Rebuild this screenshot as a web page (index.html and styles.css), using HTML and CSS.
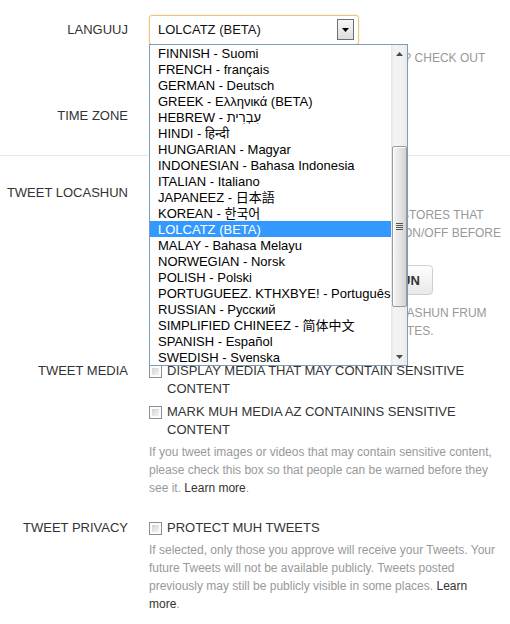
FILE: index.html
```html
<!DOCTYPE html>
<html lang="en">
<head>
<meta charset="utf-8">
<title>Settings</title>
<link rel="stylesheet" href="styles.css">
</head>
<body>
<div class="settings">
  <div class="row row-lang">
    <div class="label label-select">LANGUUJ</div>
    <div class="control">
      <div class="select-wrap">
        <div class="select is-open">
          <span class="select-value">LOLCATZ (BETA)</span>
          <span class="select-btn"><svg width="7" height="4" viewBox="0 0 7 4"><path d="M0 0H7L3.5 4Z" fill="#000"/></svg></span>
        </div>
        <div class="dropdown">
          <ul class="options">
            <li>FINNISH - Suomi</li>
            <li>FRENCH - français</li>
            <li>GERMAN - Deutsch</li>
            <li>GREEK - Ελληνικά (BETA)</li>
            <li>HEBREW - עִבְרִית</li>
            <li>HINDI - हिन्दी</li>
            <li>HUNGARIAN - Magyar</li>
            <li>INDONESIAN - Bahasa Indonesia</li>
            <li>ITALIAN - Italiano</li>
            <li>JAPANEEZ - 日本語</li>
            <li>KOREAN - 한국어</li>
            <li class="is-selected">LOLCATZ (BETA)</li>
            <li>MALAY - Bahasa Melayu</li>
            <li>NORWEGIAN - Norsk</li>
            <li>POLISH - Polski</li>
            <li>PORTUGUEEZ. KTHXBYE! - Português</li>
            <li>RUSSIAN - Русский</li>
            <li>SIMPLIFIED CHINEEZ - 简体中文</li>
            <li>SPANISH - Español</li>
            <li>SWEDISH - Svenska</li>
          </ul>
          <div class="scrollbar">
            <span class="sb-arrow"><svg width="7" height="4" viewBox="0 0 7 4"><path d="M3.5 0L7 4H0Z" fill="#4a4a4a"/></svg></span>
            <span class="sb-thumb"><span class="sb-grip"></span></span>
            <span class="sb-arrow sb-arrow-down"><svg width="7" height="4" viewBox="0 0 7 4"><path d="M0 0H7L3.5 4Z" fill="#4a4a4a"/></svg></span>
          </div>
        </div>
      </div>
      <p class="help caps">IZ U WANTIN TO HALP TRANZLATE TWITTER? CHECK OUT<br>DA TRANZLASHUN CENTUR.</p>
    </div>
  </div>

  <div class="row row-time">
    <div class="label label-select">TIME ZONE</div>
    <div class="control">
      <div class="select">
        <span class="select-value">(GMT-08:00) PACIFIK TIEM</span>
        <span class="select-btn"><svg width="7" height="4" viewBox="0 0 7 4"><path d="M0 0H7L3.5 4Z" fill="#000"/></svg></span>
      </div>
    </div>
  </div>

  <div class="row row-loc">
    <div class="label">TWEET LOCASHUN</div>
    <div class="control">
      <label class="check"><span class="box"></span><span class="check-text">ADD A LOCASHUN TO MUH TWEETS</span></label>
      <p class="help caps help-loc">WHEN U TWEET WIF LOCASHUN, TWITTER STORES THAT<br>LOCASHUN. U CAN SWITCH DA LOCASHUN ON/OFF BEFORE<br>EACH TWEET.</p>
      <button class="btn" type="button">DELEET ALL LOCASHUN INFORMASHUN</button>
      <p class="help caps help-after-btn">DIS WIL DELEET ALL DA LOCASHUN INFORMASHUN FRUM<br>ALL UR PAST TWEETS. IT MAY TAKE 30 MINUTES.</p>
    </div>
  </div>

  <div class="row row-media">
    <div class="label">TWEET MEDIA</div>
    <div class="control">
      <label class="check"><span class="box"></span><span class="check-text">DISPLAY MEDIA THAT MAY CONTAIN SENSITIVE CONTENT</span></label>
      <label class="check check-next"><span class="box"></span><span class="check-text">MARK MUH MEDIA AZ CONTAININS SENSITIVE CONTENT</span></label>
      <p class="help help-text">If you tweet images or videos that may contain sensitive content,<br>please check this box so that people can be warned before they<br>see it. <a class="link" href="#">Learn more</a>.</p>
    </div>
  </div>

  <div class="row row-privacy">
    <div class="label">TWEET PRIVACY</div>
    <div class="control">
      <label class="check"><span class="box"></span><span class="check-text">PROTECT MUH TWEETS</span></label>
      <p class="help help-text">If selected, only those you approve will receive your Tweets. Your<br>future Tweets will not be available publicly. Tweets posted<br>previously may still be publicly visible in some places. <a class="link" href="#">Learn<br>more</a>.</p>
    </div>
  </div>
</div>
</body>
</html>
```

FILE: styles.css
```css
* { box-sizing: border-box; }

html, body {
  margin: 0;
  padding: 0;
  background: #fff;
}

body {
  font-family: "Liberation Sans", Arial, "DejaVu Sans", "Noto Sans CJK SC", sans-serif;
  font-size: 13px;
  color: #333;
  width: 510px;
  height: 624px;
  overflow: hidden;
}

.settings {
  padding-top: 15px;
}

.row {
  display: grid;
  grid-template-columns: 128px 361px;
  column-gap: 21px;
}

.label {
  text-align: right;
  line-height: 18px;
  color: #333;
  white-space: nowrap;
}

.label-select {
  line-height: 30px;
}

.control {
  min-width: 0;
}

/* select */
.select-wrap {
  position: relative;
  width: 210px;
}

.select {
  width: 210px;
  height: 30px;
  border: 1px solid #c8c8c8;
  border-radius: 3px;
  display: flex;
  align-items: center;
  justify-content: space-between;
  padding: 0 4px 1px 8px;
  background: #fff;
  color: #111;
  line-height: 18px;
}

.select.is-open {
  border-color: #e6c680;
  box-shadow: 0 0 2px rgba(240, 200, 110, 0.6);
}

.select-btn {
  width: 17px;
  height: 21px;
  border: 1px solid #6f6f6f;
  background: linear-gradient(#f6f6f6, #dedede);
  display: flex;
  align-items: center;
  justify-content: center;
}

/* dropdown list */
.dropdown {
  position: absolute;
  top: 29px;
  left: 0;
  width: 259px;
  display: flex;
  border: 1px solid #7f9db9;
  background: #fff;
  z-index: 10;
}

.options {
  list-style: none;
  margin: 0;
  padding: 0;
  width: 241px;
}

.options li {
  height: 16px;
  line-height: 18px;
  padding-left: 8px;
  color: #000;
  white-space: nowrap;
  overflow: hidden;
}

.options li.is-selected {
  background: #3399ff;
  color: #fff;
}

.scrollbar {
  width: 16px;
  display: flex;
  flex-direction: column;
  align-items: center;
  background: linear-gradient(to right, #e6e6e6, #f4f4f4 3px, #f0f0f0 12px, #e9e9e9);
}

.sb-arrow {
  height: 17px;
  width: 16px;
  display: flex;
  align-items: center;
  justify-content: center;
  flex: none;
}

.sb-arrow-down {
  margin-top: auto;
}

.sb-thumb {
  margin-top: 84px;
  width: 15px;
  height: 161px;
  border: 1px solid #9a9a9a;
  border-radius: 2px;
  background: linear-gradient(to right, #f4f4f4, #e6e6e6 50%, #d3d3d3);
  box-shadow: inset 1px 1px 0 #fff;
  display: flex;
  align-items: center;
  justify-content: center;
  flex: none;
}

.sb-grip {
  width: 7px;
  height: 7px;
  background: repeating-linear-gradient(#555 0 1px, transparent 1px 2px);
}

/* help text */
.help {
  margin: 4px 0 0;
  font-size: 12px;
  line-height: 18px;
  color: #999;
  white-space: nowrap;
}

.caps {
  text-transform: uppercase;
}

.link {
  color: #333;
  text-decoration: none;
}

/* rows spacing */
.row-time {
  margin-top: 16px;
  padding-bottom: 24px;
  border-bottom: 1px solid #e8e8e8;
}

.row-loc {
  padding-top: 28px;
}

.row-media {
  margin-top: 22px;
}

.row-privacy {
  margin-top: 22px;
}

/* checkbox rows */
.check {
  display: flex;
  align-items: flex-start;
  gap: 5px;
  line-height: 18px;
  color: #333;
}

.check-next {
  margin-top: 5px;
}

.box {
  flex: none;
  width: 13px;
  height: 13px;
  margin-top: 3px;
  border: 1px solid #8e8f8f;
  padding: 2px;
  background: linear-gradient(135deg, #cfd1d3, #f6f6f6) content-box, #fcfcfc;
}

.check-text {
  min-width: 0;
}

/* button */
.btn {
  display: block;
  margin-top: 5px;
  height: 30px;
  padding: 0 12px;
  border: 1px solid #cfcfcf;
  border-radius: 4px;
  background: linear-gradient(#fefefe, #e8e8e8);
  font-family: inherit;
  font-size: 13px;
  font-weight: bold;
  color: #333;
  white-space: nowrap;
}

.help-after-btn {
  margin-top: 9px;
}
```
